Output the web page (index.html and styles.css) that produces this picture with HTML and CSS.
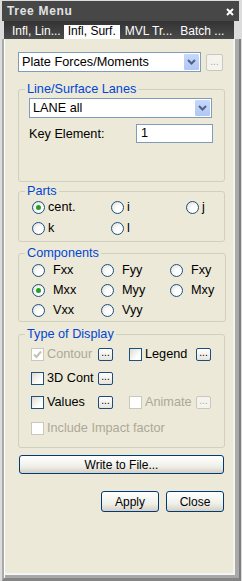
FILE: index.html
```html
<!DOCTYPE html>
<html lang="en">
<head>
  <meta charset="UTF-8"/>
  <title>Tree Menu</title>
  <link rel="stylesheet" href="styles.css">
</head>
<body>
<div class="win">
  <div class="titlebar">
    <span class="title">Tree Menu</span>
    <svg class="x" width="8" height="8" viewBox="0 0 8 8"><path d="M1 1L7 7M7 1L1 7" stroke="#fff" stroke-width="2"/></svg>
  </div>
  <div class="tabs">
    <span class="tab">Infl, Lin...</span>
    <span class="tab on">Infl, Surf.</span>
    <span class="tab">MVL Tr...</span>
    <span class="tab">Batch ...</span>
  </div>

  <div class="panel">
    <div class="toprow">
      <div class="combo wide">
        <span class="val">Plate Forces/Moments</span>
        <span class="arr"><svg width="9" height="6" viewBox="0 0 9 6"><path d="M1 1L4.5 4.5L8 1" stroke="#4d6185" stroke-width="2" fill="none"/></svg></span>
      </div>
      <span class="dots big off">...</span>
    </div>

    <!-- lanes -->
    <fieldset class="grp lanes">
      <legend>Line/Surface Lanes</legend>
      <div class="combo">
        <span class="val">LANE all</span>
        <span class="arr"><svg width="9" height="6" viewBox="0 0 9 6"><path d="M1 1L4.5 4.5L8 1" stroke="#4d6185" stroke-width="2" fill="none"/></svg></span>
      </div>
      <div class="keyrow">
        <span>Key Element:</span>
        <span class="edit">1</span>
      </div>
    </fieldset>

    <fieldset class="grp parts">
      <legend>Parts</legend>
      <div class="opts three-a">
        <label class="opt"><span class="rad on"></span>cent.</label>
        <label class="opt"><span class="rad"></span>i</label>
        <label class="opt"><span class="rad"></span>j</label>
        <label class="opt"><span class="rad"></span>k</label>
        <label class="opt"><span class="rad"></span>l</label>
      </div>
    </fieldset>

    <fieldset class="grp comps">
      <legend>Components</legend>
      <div class="opts three-b">
        <label class="opt"><span class="rad"></span>Fxx</label>
        <label class="opt"><span class="rad"></span>Fyy</label>
        <label class="opt"><span class="rad"></span>Fxy</label>
        <label class="opt"><span class="rad on"></span>Mxx</label>
        <label class="opt"><span class="rad"></span>Myy</label>
        <label class="opt"><span class="rad"></span>Mxy</label>
        <label class="opt"><span class="rad"></span>Vxx</label>
        <label class="opt"><span class="rad"></span>Vyy</label>
      </div>
    </fieldset>

    <fieldset class="grp disp">
      <legend>Type of Display</legend>
      <div class="dgrid">
        <label class="chk off"><span class="box"><svg width="9" height="9" viewBox="0 0 9 9"><path d="M1 4.5L3.5 7L8 1.5" stroke="#c5c2b2" stroke-width="2" fill="none"/></svg></span>Contour</label>
        <span class="dots">...</span>
        <label class="chk"><span class="box"></span>Legend</label>
        <span class="dots">...</span>

        <label class="chk"><span class="box"></span>3D Cont</label>
        <span class="dots">...</span>
        <span></span><span></span>

        <label class="chk"><span class="box"></span>Values</label>
        <span class="dots">...</span>
        <label class="chk off"><span class="box"></span>Animate</label>
        <span class="dots off">...</span>

        <label class="chk off span4"><span class="box"></span>Include Impact factor</label>
      </div>
    </fieldset>

    <button class="btn write">Write to File...</button>
    <div class="actions">
      <button class="btn">Apply</button>
      <button class="btn">Close</button>
    </div>
  </div>
</div>
</body>
</html>
```
FILE: styles.css
```css
body { margin:0; background:#dcdcdc; font-family:"Liberation Sans", Arial, sans-serif; font-size:12.7px; color:#000; }
.win { width:242px; height:581px; box-sizing:border-box; padding:1px 1px 0 2px; background:#dcdcdc; display:flex; flex-direction:column; }

.titlebar { height:20px; margin-right:2px; background:#474747; display:flex; align-items:center; justify-content:space-between; padding:0 5px 0 5px; }
.title { color:#e2e2e2; font-weight:bold; font-size:12px; letter-spacing:0.7px; }
.x { margin-top:1px; }

.tabs { height:18px; margin:0 7px 0 2px; background:linear-gradient(#333,#4b4b4b); display:flex; align-items:flex-end; padding-left:4px; font-size:12px; }
.tab { color:#fff; padding:0 4px 1px; line-height:13px; white-space:nowrap; }
.tab.on { background:#fff; color:#000; margin:0 1px 0 -1px; padding-top:0; }

.panel { flex:1; background:#ece9d8; border-left:2px solid #a9a9a9; border-right:2px solid #7d7d7d; border-bottom:3px solid #858585;
  box-shadow:inset 1px 0 #fff, inset -4px 0 #a9a9a9, inset 0 -3px #a9a9a9, inset -6px 0 #f4f4f4, inset 0 -5px #f4f4f4;
  padding:13px 14px 0 14px; display:flex; flex-direction:column; }

.toprow { display:flex; align-items:center; gap:5px; }
.combo { height:20px; box-sizing:border-box; border:1px solid #7f9db9; background:#fff; display:flex; align-items:center; justify-content:space-between; padding:0 1px 0 3px; }
.combo.wide { width:183px; }
.arr { width:15px; height:16px; background:linear-gradient(#c8d8fc,#b0c6f4); border-radius:1px; display:flex; align-items:center; justify-content:center; }

.dots { width:15px; height:13px; box-sizing:border-box; border:1px solid #1c4b7c; border-radius:2px; background:linear-gradient(#fff,#e6e4da); font-size:10px; line-height:8px; text-align:center; color:#000; }
.dots.big { width:17px; height:17px; line-height:13px; }
.dots.off { border-color:#cbc8bb; color:#aca899; background:#f4f3ee; }

.grp { border:1px solid #d0d0bf; border-radius:3px; padding:0 11px 0 10px; margin:0; }
.grp legend { color:#0046d5; padding:0 2px; margin-left:-4px; line-height:14px; }
.lanes { margin-top:10px; padding-top:2px; padding-bottom:38px; }
.lanes .combo { width:183px; }
.keyrow { margin-top:6px; display:flex; align-items:center; justify-content:space-between; height:19px; }
.edit { width:77px; height:19px; box-sizing:border-box; border:1px solid #7f9db9; background:#fff; padding-left:4px; line-height:17px; }

.parts { margin-top:2px; padding-top:2px; padding-bottom:6px; }
.comps { margin-top:4px; padding-top:3px; padding-bottom:4px; }
.opts { display:grid; }
.three-a { grid-template-columns:79px 75px auto; padding-left:3px; row-gap:7px; }
.three-b { grid-template-columns:69px 69px auto; padding-left:3px; row-gap:6px; }
.opt { display:flex; align-items:center; height:14px; gap:3px; }
.three-b .opt { gap:8px; }
.rad { width:13px; height:13px; box-sizing:border-box; border:1px solid #1c5180; border-radius:50%; background:radial-gradient(circle at 65% 65%,#fff 30%,#dcdad0); position:relative; }
.rad.on::after { content:""; position:absolute; left:3px; top:3px; width:5px; height:5px; border-radius:50%; background:#21a121; }

.disp { margin-top:5px; padding-top:5px; padding-bottom:11px; }
.dgrid { display:grid; grid-template-columns:67px 31px 67px auto; row-gap:8px; padding-left:2px; }
.chk { display:flex; align-items:center; gap:3px; height:16px; }
.dgrid .dots { align-self:center; }
.box { width:13px; height:13px; box-sizing:border-box; border:1px solid #1c5180; background:linear-gradient(135deg,#dcdad0,#fff 70%); display:flex; align-items:center; justify-content:center; }
.chk.off { color:#aca899; }
.chk.off .box { border-color:#cac8bb; background:#fff; }
.span4 { grid-column:1 / 5; margin-top:2px; }

.btn { font-family:"Liberation Sans", Arial, sans-serif; font-size:12px; color:#000; border:1px solid #003c74; border-radius:3px; background:linear-gradient(#fff,#f0f0ea 60%,#d6d0c5); padding:0; }
.write { margin:7px 0 0 1px; height:19px; width:205px; }
.actions { margin-top:17px; display:flex; justify-content:flex-end; gap:7px; padding-right:1px; }
.actions .btn { width:58px; height:21px; }
```
